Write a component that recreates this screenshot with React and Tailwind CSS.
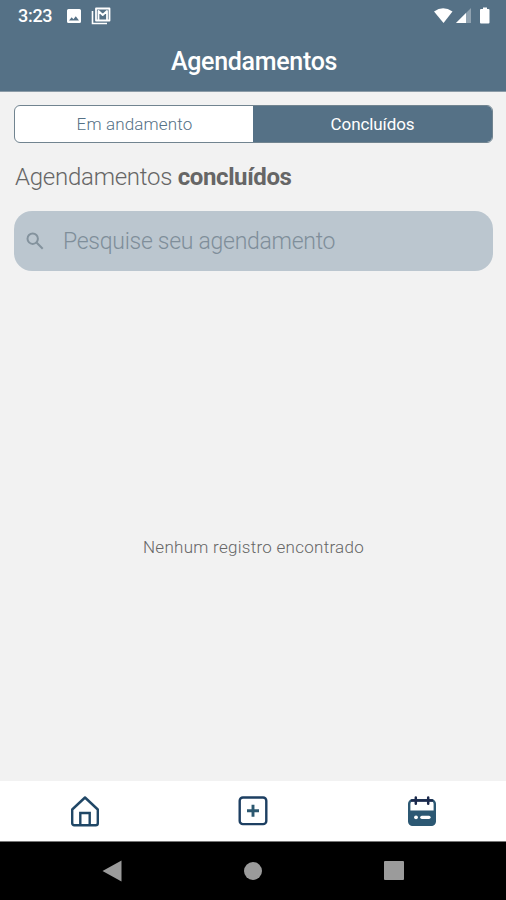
import React from "react";

function StatusBar() {
  return (
    <div className="flex h-8 items-center justify-between pl-[18px] pr-[14px] text-white">
      <div className="flex items-center">
        <span className="w-[48px] text-[18px] leading-8 font-medium tracking-[-0.3px]">
          3:23
        </span>
        <svg width="16" height="16" viewBox="0 0 16 16">
          <path
            fill="currentColor"
            fillRule="evenodd"
            d="M2.500 1h11A1.500 1.500 0 0 1 15 2.500v11a1.500 1.500 0 0 1-1.500 1.500h-11A1.500 1.500 0 0 1 1 13.500v-11A1.500 1.500 0 0 1 2.500 1zM3 12.500h10l-3.200-4.200-2.400 3-1.700-2z"
          />
        </svg>
        <svg className="ml-[9px]" width="20" height="18" viewBox="0 0 20 18">
          <path d="M1.500 4v12.500H16" fill="none" stroke="currentColor" strokeWidth="1.600" />
          <path
            d="M5 1.500h13.500v12H5zM7.500 13V4l4.200 4L16 4v9"
            fill="none"
            stroke="currentColor"
            strokeWidth="1.800"
            strokeLinejoin="round"
          />
        </svg>
      </div>
      <svg width="58" height="20" viewBox="0 0 58 20" fill="currentColor">
        <path d="M0 5.500Q9-1 18.500 5.500L9.500 17z" />
        <path d="M37 2v15H22z" opacity=".35" />
        <path d="M32 7v10H22z" />
        <path d="M47 3h2V1.500h4V3h1.500q1 0 1 1v12.500q0 1-1 1H47q-1 0-1-1V4q0-1 1-1z" />
      </svg>
    </div>
  );
}

function HomeIcon() {
  return (
    <svg width="30" height="32" viewBox="0 0 30 32" fill="none" stroke="#204766" strokeWidth="2.400">
      <path
        d="M2.200 14.500 15 2.500l12.800 12v13.700a2 2 0 0 1-2 2H4.200a2 2 0 0 1-2-2z"
        strokeLinejoin="round"
      />
      <path d="M10.300 30V18h9.400V30" />
    </svg>
  );
}

function AddIcon() {
  return (
    <svg width="30" height="32" viewBox="0 0 30 32" fill="none" stroke="#1d3f62" strokeWidth="2.400">
      <rect x="1.700" y="2.500" width="26.600" height="26.600" rx="3.200" />
      <path d="M15 9.800v12M9 15.800h12" stroke="#2c5870" strokeWidth="2.900" />
    </svg>
  );
}

function CalendarIcon() {
  return (
    <svg width="30" height="32" viewBox="0 0 30 32" fill="none">
      <rect x="2.200" y="5.300" width="25.600" height="24.600" rx="3.500" stroke="#2c5873" strokeWidth="2.400" />
      <path d="M2 15.500h26v11a4 4 0 0 1-4 4H6a4 4 0 0 1-4-4z" fill="#2c5873" />
      <path d="M5 5.500h20M8.800 2.500v6.300M21.200 2.500v6.300" stroke="#1b294c" strokeWidth="2.500" strokeLinecap="round" />
      <circle cx="9" cy="22.300" r="1.900" fill="#fff" />
      <path d="M14.800 22.300h7.200" stroke="#fff" strokeWidth="3.200" strokeLinecap="round" />
    </svg>
  );
}

function BottomNav() {
  return (
    <nav className="grid h-[60px] grid-cols-3 items-center justify-items-center bg-white pl-px">
      <button aria-label="Início">
        <HomeIcon />
      </button>
      <button aria-label="Novo agendamento">
        <AddIcon />
      </button>
      <button aria-label="Agendamentos">
        <CalendarIcon />
      </button>
    </nav>
  );
}

function SystemNav() {
  return (
    <div className="flex h-[59px] items-center justify-between border-t border-[#777] bg-black px-[102px] pb-px text-[#9b9b9b]">
      <svg width="20" height="22" viewBox="0 0 20 22" fill="currentColor">
        <path d="M.5 11 19.500.5v21z" />
      </svg>
      <div className="h-[18px] w-[18px] rounded-full bg-[#9b9b9b]" />
      <div className="h-[19px] w-5 rounded-[1px] bg-[#9b9b9b]" />
    </div>
  );
}

export default function App() {
  return (
    <div className="flex h-[900px] w-[506px] flex-col overflow-hidden bg-[#f2f2f2] font-['Roboto','Liberation_Sans',sans-serif]">
      <header className="h-[92px] border-b border-[#8b9ba7] bg-[#557186]">
        <StatusBar />
        <h1 className="pl-0.5 text-center text-[25px] leading-[59px] font-medium tracking-[-0.3px] text-white">
          Agendamentos
        </h1>
      </header>

      <main className="flex flex-1 flex-col pt-[13px] pr-[13px] pl-[14px]">
        <div className="grid h-[38px] grid-cols-[238px_1fr] overflow-hidden rounded-[6px] border border-[#718490] bg-white text-[17px] leading-9">
          <button className="pl-px font-light tracking-[0.15px] text-[#557186]">
            Em andamento
          </button>
          <button className="bg-[#557186] tracking-[-0.1px] text-white">
            Concluídos
          </button>
        </div>

        <h2 className="mt-[18px] pl-px text-[24px] leading-8 font-light tracking-[-0.25px] text-[#666]">
          Agendamentos{" "}
          <strong className="font-bold tracking-[-0.4px]">concluídos</strong>
        </h2>

        <div className="mt-[18px] flex h-[60px] items-center rounded-[18px] bg-[#bbc6cf] pl-3">
          <svg width="18" height="18" viewBox="0 0 18 18" fill="none" stroke="#83929d" strokeWidth="2">
            <circle cx="6.700" cy="6.700" r="5.200" />
            <path d="m10.500 10.500 6.200 6.200" />
          </svg>
          <span className="ml-[19px] pt-0.5 text-[23px] font-light tracking-[-0.28px] text-[#7f8e9a]">
            Pesquise seu agendamento
          </span>
        </div>

        <div className="flex flex-1 items-center justify-center pt-[42px]">
          <p className="text-[17px] leading-6 font-light tracking-[0.28px] text-[#666]">
            Nenhum registro encontrado
          </p>
        </div>
      </main>

      <BottomNav />
      <SystemNav />
    </div>
  );
}
